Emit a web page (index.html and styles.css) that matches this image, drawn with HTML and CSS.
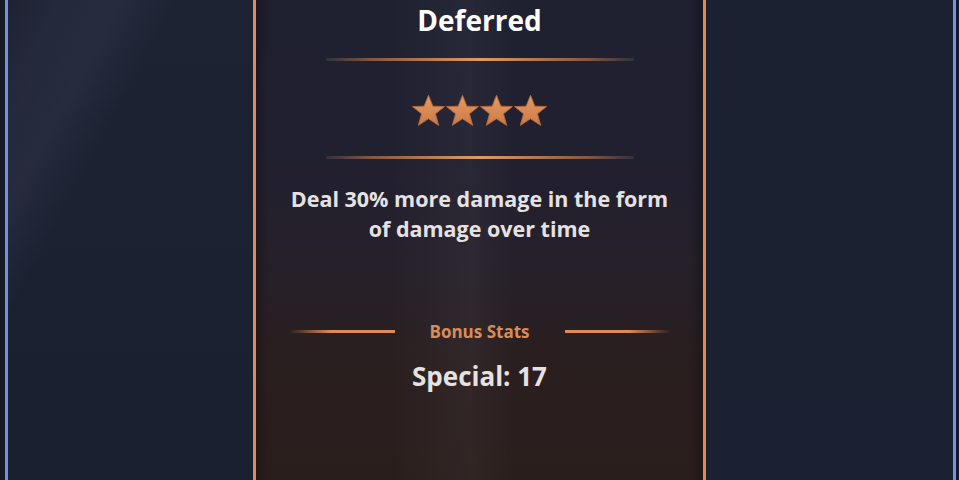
FILE: index.html
```html
<!DOCTYPE html>
<html lang="en">
<head>
    <meta charset="UTF-8">
    <meta name="viewport" content="width=device-width, initial-scale=1.0">
    <title>Deferred</title>
    <link rel="stylesheet" href="styles.css">
</head>
<body>
    <div class="board">
        <div class="side side-left"></div>

        <div class="card">
            <h1 class="card-title">Deferred</h1>
            <div class="divider"></div>

            <svg width="0" height="0" class="defs">
                <defs>
                    <linearGradient id="starFill" x1="0" y1="0" x2="0" y2="1">
                        <stop offset="0" stop-color="#e89a62"/>
                        <stop offset="1" stop-color="#c97a48"/>
                    </linearGradient>
                </defs>
            </svg>

            <div class="stars">
                <svg class="star" viewBox="0 0 24 24"><polygon points="12,1.5 15,9 23,9.3 16.8,14.3 19,22.2 12,17.7 5,22.2 7.2,14.3 1,9.3 9,9"/></svg>
                <svg class="star" viewBox="0 0 24 24"><polygon points="12,1.5 15,9 23,9.3 16.8,14.3 19,22.2 12,17.7 5,22.2 7.2,14.3 1,9.3 9,9"/></svg>
                <svg class="star" viewBox="0 0 24 24"><polygon points="12,1.5 15,9 23,9.3 16.8,14.3 19,22.2 12,17.7 5,22.2 7.2,14.3 1,9.3 9,9"/></svg>
                <svg class="star" viewBox="0 0 24 24"><polygon points="12,1.5 15,9 23,9.3 16.8,14.3 19,22.2 12,17.7 5,22.2 7.2,14.3 1,9.3 9,9"/></svg>
            </div>

            <div class="divider"></div>

            <p class="card-desc">Deal 30% more damage in the form of damage over time</p>

            <div class="bonus">
                <span class="bonus-line bonus-line-left"></span>
                <span class="bonus-label">Bonus Stats</span>
                <span class="bonus-line bonus-line-right"></span>
            </div>

            <div class="bonus-value">Special: 17</div>
        </div>

        <div class="side side-right"></div>
    </div>
</body>
</html>
```

FILE: styles.css
```css
html, body {
    margin: 0;
    padding: 0;
    height: 100%;
    overflow: hidden;
}
body {
    font-family: "Open Sans", Lato, sans-serif;
    background: #151a26;
}
.board {
    display: flex;
    height: 480px;
}
.side {
    background: #1b2233;
}
.side-left {
    margin-left: 5px;
    border-left: 3px solid #7890e2;
    width: 245px;
    background:
        linear-gradient(118deg, rgba(0,0,0,0) 0%, rgba(120,130,160,0.07) 10%, rgba(120,130,160,0.1) 22%, rgba(0,0,0,0) 34%),
        linear-gradient(to bottom, #1d2333 0%, #1a2131 60%, #19202f 100%);
}
.side-right {
    border-right: 3px solid #7890e2;
    width: 247px;
    margin-right: 3px;
    background: linear-gradient(to bottom, #1b2131 0%, #1a2132 100%);
}
.card {
    width: 447px;
    border-left: 3px solid #e08a55;
    border-right: 3px solid #e08a55;
    background:
        linear-gradient(to right, rgba(0,0,0,0.25) 0px, rgba(0,0,0,0) 14px, rgba(0,0,0,0) calc(100% - 14px), rgba(0,0,0,0.25) 100%),
        linear-gradient(to right, rgba(255,255,255,0) 30%, rgba(255,255,255,0.035) 48%, rgba(255,255,255,0) 58%),
        linear-gradient(to bottom, #1f2030 0%, #212030 30%, #26202a 55%, #2a1f20 75%, #2a1e1d 100%);
    display: flex;
    flex-direction: column;
    align-items: center;
    color: #ece8e8;
}
.defs {
    position: absolute;
}
.card-title {
    margin: 1px 0 0;
    font-size: 28px;
    font-weight: 700;
    color: #ffffff;
    line-height: 38px;
}
.divider {
    width: 308px;
    height: 3px;
    background: linear-gradient(to right, rgba(120,110,120,0.2) 0%, rgba(180,110,70,0.7) 15%, #e29a63 50%, rgba(180,110,70,0.7) 85%, rgba(120,110,120,0.2) 100%);
}
.divider:first-of-type {
    margin-top: 19px;
}
.stars {
    display: flex;
    margin: 32px 0 28px;
}
.star {
    width: 35px;
    height: 35px;
    margin: 0 -0.5px;
    fill: url(#starFill);
    stroke: #b0683e;
    stroke-width: 0.6;
}
.card-desc {
    margin: 25px 0 0;
    width: 388px;
    text-align: center;
    font-size: 21.5px;
    font-weight: 700;
    line-height: 30px;
    color: #e6e2e2;
}
.bonus {
    display: flex;
    align-items: center;
    margin-top: 76px;
    gap: 35px;
}
.bonus-line {
    width: 106px;
    height: 3px;
}
.bonus-line-left {
    background: linear-gradient(to right, rgba(224,138,85,0) 0%, #e08a55 40%, #e08a55 100%);
}
.bonus-line-right {
    background: linear-gradient(to right, #e08a55 0%, #e08a55 60%, rgba(224,138,85,0) 100%);
}
.bonus-label {
    font-size: 17px;
    font-weight: 700;
    color: #d98c58;
}
.bonus-value {
    margin-top: 15px;
    font-size: 26px;
    font-weight: 700;
    color: #e6e2e2;
}
```
